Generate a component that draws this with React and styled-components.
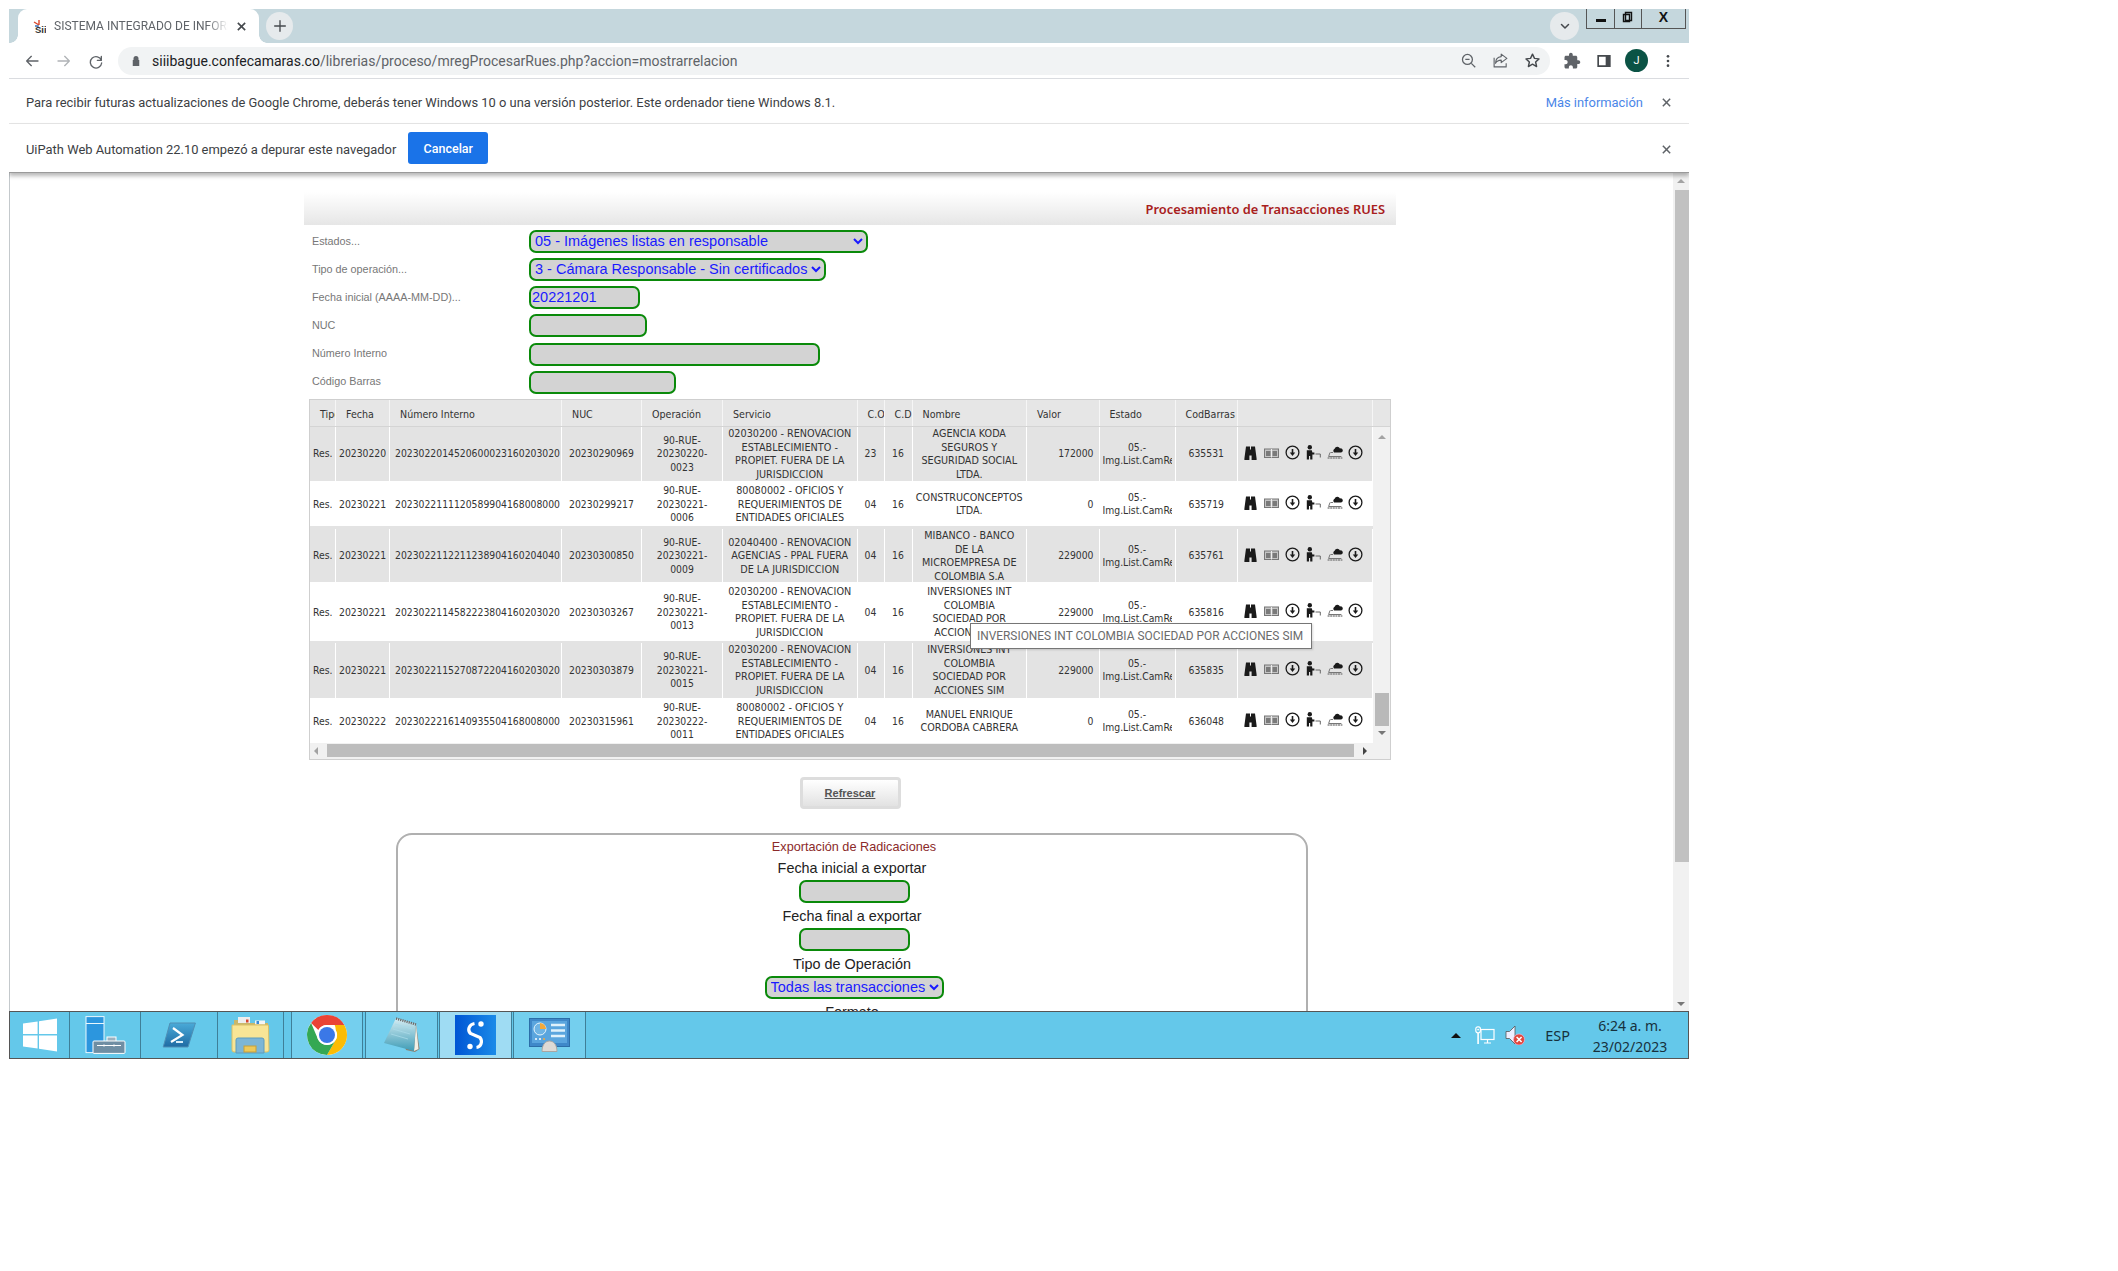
import React from "react";
import styled, { createGlobalStyle } from "styled-components";

const Global = createGlobalStyle`
  html, body { margin: 0; padding: 0; background: #fff; overflow: hidden; }
  body { font-family: "Liberation Sans", Arial, sans-serif; }
  * { box-sizing: border-box; }
`;

const Shell = styled.div`
  width: 1680px;
  height: 1050px;
  margin: 9px 0 0 9px;
  display: flex;
  flex-direction: column;
  overflow: hidden;
`;

/* ---------- browser chrome ---------- */
const TabStrip = styled.div`
  height: 34px;
  flex: none;
  background: #c5d7dd;
  display: flex;
  align-items: flex-end;
  padding-left: 9px;
  position: relative;
`;
const Tab = styled.div`
  width: 241px;
  height: 34px;
  background: #fff;
  border-radius: 9px 9px 0 0;
  display: flex;
  align-items: center;
  padding: 0 11px 0 15px;
  gap: 8px;
  position: relative;
  &::before,
  &::after {
    content: "";
    position: absolute;
    bottom: 0;
    width: 8px;
    height: 8px;
  }
  &::before {
    left: -8px;
    background: radial-gradient(circle at 0 0, #c5d7dd 7.5px, #fff 8px);
  }
  &::after {
    right: -8px;
    background: radial-gradient(circle at 100% 0, #c5d7dd 7.5px, #fff 8px);
  }
`;
const TabTitle = styled.span`
  font: 12px "Roboto", sans-serif;
  color: #5f6368;
  width: 174px;
  white-space: nowrap;
  overflow: hidden;
  -webkit-mask-image: linear-gradient(90deg, #000 88%, transparent);
  mask-image: linear-gradient(90deg, #000 88%, transparent);
`;
const TabClose = styled.span`
  display: flex;
  color: #45494d;
`;
const RoundButton = styled.span`
  width: ${(p) => p.$w}px;
  height: ${(p) => p.$h}px;
  border-radius: 50%;
  background: #e6eaec;
  display: flex;
  align-items: center;
  justify-content: center;
  color: #45494d;
  flex: none;
`;
const NewTabSlot = styled.div`
  align-self: center;
  margin-left: 7px;
`;
const StripRight = styled.div`
  margin-left: auto;
  align-self: flex-start;
  display: flex;
  align-items: flex-start;
  padding-right: 3px;
  gap: 7px;
`;
const ChevronSlot = styled.div`
  margin-top: 3px;
`;
const WinControls = styled.div`
  display: flex;
  height: 20px;
  width: 100px;
  border: 1px solid #555;
  border-top: none;
`;
const WinControl = styled.span`
  width: ${(p) => p.$w}px;
  border-right: ${(p) => (p.$last ? "none" : "1px solid #555")};
  display: flex;
  align-items: center;
  justify-content: center;
  font: bold 14px "Liberation Sans", sans-serif;
  color: #111;
  padding-bottom: 3px;
`;
const MinBar = styled.span`
  width: 10px;
  height: 3px;
  background: #111;
  margin-top: 7px;
`;
const Toolbar = styled.div`
  height: 36px;
  flex: none;
  background: #fff;
  border-bottom: 1px solid #dadce0;
  display: flex;
  align-items: center;
  position: relative;
  padding-left: 7px;
  color: #5f6368;
`;
const NavIcon = styled.span`
  width: ${(p) => p.$w || 32}px;
  display: flex;
  justify-content: center;
  color: ${(p) => p.$color || "#5f6368"};
  flex: none;
`;
const Omnibox = styled.div`
  width: 1432px;
  height: 28px;
  margin-left: 6px;
  background: #f1f3f4;
  border-radius: 14px;
  display: flex;
  align-items: center;
  padding: 0 0 0 12px;
`;
const Url = styled.span`
  margin-left: 10px;
  font: 14px "Roboto", sans-serif;
  color: #5f6368;
  white-space: nowrap;
`;
const UrlHost = styled.span`
  color: #202124;
`;
const OmniIcons = styled.div`
  margin-left: auto;
  display: flex;
  padding-right: 2px;
`;
const ToolIcons = styled.div`
  display: flex;
  align-items: center;
  margin-left: 6px;
`;
const Avatar = styled.span`
  width: 23px;
  height: 23px;
  margin: 0 5px;
  border-radius: 50%;
  background: #0b5345;
  color: #fff;
  font: 11px "Roboto", sans-serif;
  display: flex;
  align-items: center;
  justify-content: center;
`;
const InfoBar = styled.div`
  height: ${(p) => p.$h}px;
  flex: none;
  background: #fff;
  border-bottom: 1px solid ${(p) => p.$line};
  ${(p) => p.$shadow && "box-shadow: 0 3px 4px rgba(0,0,0,.28); position: relative; z-index: 2;"}
  display: flex;
  align-items: center;
  padding: 2px 17px 0 17px;
  font: 12.92px "Roboto", sans-serif;
  color: #3c4043;
`;
const InfoLink = styled.span`
  margin-left: auto;
  color: #4a86e8;
  margin-right: 18px;
`;
const CancelButton = styled.span`
  width: 80px;
  height: 32px;
  margin: 0 0 2px 12px;
  background: #1a73e8;
  border-radius: 3px;
  color: #fff;
  font-weight: 500;
  font-size: 12.5px;
  display: flex;
  align-items: center;
  justify-content: center;
`;
const InfoClose = styled.span`
  display: flex;
  color: #5f6368;
  margin-left: ${(p) => (p.$auto ? "auto" : "0")};
`;

/* ---------- page ---------- */
const Main = styled.div`
  flex: 1;
  min-height: 0;
  display: flex;
  border-left: 1px solid #c4c9cc;
  background: #fff;
  overflow: hidden;
`;
const Page = styled.div`
  flex: 1;
  padding: 19px 0 0 294px;
  overflow: hidden;
`;
const PageScrollbar = styled.div`
  width: 16px;
  flex: none;
  background: #f1f1f1;
  display: flex;
  flex-direction: column;
  align-items: center;
  padding-top: 6px;
`;
const ScrollArrow = styled.span`
  width: 0;
  height: 0;
  border-left: 4px solid transparent;
  border-right: 4px solid transparent;
  ${(p) => (p.$down ? "border-top: 4px solid #777;" : "border-bottom: 4px solid #a3a3a3;")}
  flex: none;
`;
const PageThumb = styled.div`
  width: 14px;
  height: 672px;
  flex: none;
  margin: 7px 0 0 2px;
  background: #c1c1c1;
`;
const PageDown = styled.div`
  flex: none;
  display: flex;
  margin-top: 140px;
`;
const Content = styled.div`
  width: 1092px;
`;
const TitleBar = styled.div`
  height: 33px;
  background: linear-gradient(180deg, #fff 0%, #e6e6e6 100%);
  display: flex;
  align-items: flex-end;
  justify-content: flex-end;
  padding: 0 11px 7px 0;
  font: 600 12.85px "Noto Sans", sans-serif;
  color: #a8201c;
`;
const Form = styled.div`
  padding: 5px 0 0 0;
`;
const FormRow = styled.div`
  height: 28.17px;
  display: flex;
  align-items: flex-start;
`;
const FormLabel = styled.label`
  width: 225px;
  height: 23px;
  padding: 0 0 2px 8px;
  display: flex;
  align-items: center;
  font-size: 10.8px;
  color: #777;
`;
const fieldCss = `
  height: 23px;
  margin: 0;
  border: 2.5px solid #0a8a0a;
  border-radius: 7px;
  background: #d3d3d3;
  color: #1a1aff;
  font: 14.5px "Liberation Sans", sans-serif;
  outline: none;
`;
const Field = styled.input`
  ${fieldCss}
  width: ${(p) => p.$w}px;
  padding: 0 1px 2px;
  display: block;
`;
const Picker = styled.select`
  ${fieldCss}
  width: ${(p) => p.$w}px;
  padding: 0 0 2px;
  display: block;
`;

/* ---------- grid ---------- */
const COLS = "26px 54px 172px 80px 81px 134.5px 27px 28px 114.5px 72.5px 76px 62.5px 134.5px";
const Frame = styled.div`
  width: 1082px;
  margin-left: 5px;
  border: 1px solid #cfcfcf;
  background: #f1f1f1;
`;
const HeadRow = styled.div`
  display: grid;
  grid-template-columns: ${COLS} 18px;
  height: 27px;
  background: #e6e6e6;
  border-bottom: 1px solid #d4d4d4;
`;
const HeadCell = styled.div`
  padding: 2px 0 0 10px;
  border-right: ${(p) => (p.$plain ? "none" : "1px solid #f6f6f6")};
  display: flex;
  align-items: center;
  overflow: hidden;
  white-space: nowrap;
  font: 10.6px "DejaVu Sans", sans-serif;
  font-stretch: condensed;
  color: #333;
`;
const Body = styled.div`
  display: flex;
  height: 316px;
`;
const Rows = styled.div`
  width: 1063px;
  flex: none;
`;
const Row = styled.div`
  display: grid;
  grid-template-columns: ${COLS};
  height: ${(p) => p.$h}px;
  padding-top: ${(p) => p.$nudge || 0}px;
  background: ${(p) => (p.$alt ? "#e3e3e3" : "#fff")};
`;
const Cell = styled.div`
  display: flex;
  align-items: center;
  min-width: 0;
  padding: ${(p) => p.$pad || "0 3px"};
  border-right: 1px solid ${(p) => (p.$alt ? "#fff" : "transparent")};
  font: ${(p) => p.$size || 10.3}px/13.6px "DejaVu Sans", sans-serif;
  font-stretch: condensed;
  color: #333;
`;
const CellText = styled.div`
  width: 100%;
  overflow: hidden;
  white-space: pre;
  text-align: ${(p) => p.$align || "center"};
`;
const IconGroup = styled.div`
  display: flex;
  margin: 0 0 3px 1px;
`;
const IconSlot = styled.span`
  width: 21px;
  height: 15px;
  display: flex;
  align-items: center;
  justify-content: center;
  color: ${(p) => p.$color || "#1a1a1a"};
`;
const VBar = styled.div`
  width: 18px;
  flex: none;
  display: flex;
  flex-direction: column;
  align-items: center;
  padding-top: 8px;
`;
const VThumb = styled.div`
  width: 14px;
  height: 33px;
  flex: none;
  margin-top: 254px;
  background: #b9b9b9;
`;
const VDown = styled.div`
  flex: none;
  display: flex;
  margin-top: 5px;
`;
const HBar = styled.div`
  height: 16px;
  display: flex;
  align-items: center;
  padding: 0 4px;
`;
const HArrow = styled.span`
  width: 0;
  height: 0;
  border-top: 4px solid transparent;
  border-bottom: 4px solid transparent;
  ${(p) => (p.$right ? "border-left: 4px solid #444;" : "border-right: 4px solid #a3a3a3;")}
  flex: none;
`;
const HThumb = styled.div`
  width: 1027px;
  height: 13px;
  margin: 0 9px;
  background: #bdbdbd;
`;
const TableWrap = styled.div`
  position: relative;
`;
const Tooltip = styled.div`
  position: absolute;
  left: 666px;
  top: 224px;
  width: 342px;
  height: 26px;
  background: #fff;
  border: 1px solid #767676;
  box-shadow: 1px 1px 2px rgba(0, 0, 0, 0.15);
  display: flex;
  align-items: center;
  padding-left: 6px;
  font: 11.9px "Roboto", sans-serif;
  color: #6b6b6b;
  white-space: nowrap;
`;
const RefreshWrap = styled.div`
  display: flex;
  justify-content: center;
  margin: 17px 0 24px;
`;
const RefreshButton = styled.span`
  width: 101px;
  height: 32px;
  border: 3px solid #ddd;
  border-radius: 4px;
  background: linear-gradient(180deg, #fff, #e2e2e2);
  display: flex;
  align-items: center;
  justify-content: center;
  font: bold 11px "Liberation Sans", sans-serif;
  color: #555;
  text-decoration: underline;
`;
const ExportBox = styled.div`
  width: 912px;
  margin-left: 92px;
  height: 400px;
  border: 2px solid #b0b0b0;
  border-radius: 16px 16px 0 0;
  padding: 4px 0 0 4px;
  display: flex;
  flex-direction: column;
  align-items: center;
`;
const ExportTitle = styled.div`
  font-size: 12.7px;
  line-height: 16px;
  color: #8b2a2a;
`;
const ExportLabel = styled.div`
  font-size: 14.4px;
  line-height: 16px;
  margin: 5px 4px 4px 0;
  color: #222;
`;

/* ---------- taskbar ---------- */
const Taskbar = styled.div`
  height: 48px;
  flex: none;
  background: #64c8ea;
  border: 1px solid #555;
  display: flex;
  position: relative;
  z-index: 3;
`;
const TaskButton = styled.div`
  width: ${(p) => p.$w}px;
  flex: none;
  display: flex;
  align-items: center;
  justify-content: center;
  border-right: 1px solid #3f7f98;
  background: ${(p) => (p.$active ? "#9fdcf3" : p.$soft ? "#74cfee" : "transparent")};
`;
const Tray = styled.div`
  margin-left: auto;
  display: flex;
  align-items: center;
  padding-right: 20px;
  font-family: "Noto Sans", sans-serif;
  color: #17313d;
`;
const TrayArrow = styled.span`
  width: 0;
  height: 0;
  border-left: 5px solid transparent;
  border-right: 5px solid transparent;
  border-bottom: 5px solid #111;
  margin-right: 14px;
`;
const TrayIcon = styled.span`
  display: flex;
  margin-right: ${(p) => p.$m}px;
`;
const TrayLang = styled.span`
  font-size: 14.5px;
  margin-right: 22px;
`;
const Clock = styled.div`
  text-align: center;
  font-size: 14px;
  line-height: 21px;
  width: 76px;
  padding-top: 1px;
`;

/* ---------- icons ---------- */
const Svg = ({ s = 16, w, h, vb = "0 0 24 24", children }) => (
  <svg width={w || s} height={h || s} viewBox={vb} fill="none">{children}</svg>
);
const line = { stroke: "currentColor", strokeWidth: 2, strokeLinecap: "round", strokeLinejoin: "round" };
const Cross = ({ s = 13, sw = 1.7 }) => (
  <Svg s={s}><path d="M4 4l16 16M20 4L4 20" stroke="currentColor" strokeWidth={sw * 24 / s} strokeLinecap="butt" /></Svg>
);
const Favicon = () => (
  <svg width="13" height="15" viewBox="0 0 13 15">
    <path d="M1 3l5 3M6 1v5" stroke="#d9472b" strokeWidth="1.4" />
    <path d="M2 7h3v2" stroke="#3a6fb5" strokeWidth="1.3" fill="none" />
    <text x="2" y="14" fontFamily="Liberation Sans" fontWeight="bold" fontSize="9.5" fill="#333">Sii</text>
  </svg>
);
const Binoculars = () => (
  <svg width="13" height="14" viewBox="0 0 13 14"><path fill="currentColor" d="M2 .6h4v3h1v-3h4l1.600 12V14H7.600V9.500H5.400V14H.4v-1.400z" /></svg>
);
const Book = () => (
  <svg width="15" height="10" viewBox="0 0 15 10"><rect x=".5" y="1" width="14" height="8.500" fill="#c4c4c4" stroke="#777" /><path d="M2 3h4.500v5H2zM8.500 3H13v5H8.500z" fill="#7a7a7a" /><path d="M7.500 1v8.500" stroke="#eee" /></svg>
);
const DownCircle = () => (
  <svg width="15" height="15" viewBox="0 0 15 15" fill="none"><circle cx="7.500" cy="7.500" r="6.400" stroke="currentColor" strokeWidth="1.300" /><path d="M7.500 4v5" stroke="currentColor" strokeWidth="1.600" /><path d="M4.800 7.500h5.400L7.500 11z" fill="currentColor" /></svg>
);
const PersonDesk = () => (
  <svg width="15" height="15" viewBox="0 0 15 15"><circle cx="3.800" cy="2.300" r="2.200" fill="currentColor" /><path fill="currentColor" d="M.8 5.200h5l.6 2.400h2v1.800H6.400v5.200H4.200V11H3v3.600H.8z" /><path d="M9.500 9h4.800v3.500" stroke="#666" strokeWidth="1" fill="none" /></svg>
);
const CloudLaptop = () => (
  <svg width="16" height="13" viewBox="0 0 16 13"><path fill="currentColor" d="M7 6.500a2.400 2.400 0 0 1 .6-3.800A3 3 0 0 1 13 2.400a2 2 0 0 1 1.200 4.100z" /><path d="M3.500 6.500H6M3 6.500L1.600 10.500h12.800" stroke="#777" strokeWidth="1" fill="none" /><path d="M.6 12h14.800" stroke="#888" strokeWidth="1.300" strokeDasharray="2 .6" /></svg>
);

const RowIcons = () => (
  <IconGroup>
    <IconSlot><Binoculars /></IconSlot>
    <IconSlot><Book /></IconSlot>
    <IconSlot><DownCircle /></IconSlot>
    <IconSlot><PersonDesk /></IconSlot>
    <IconSlot><CloudLaptop /></IconSlot>
    <IconSlot><DownCircle /></IconSlot>
  </IconGroup>
);

const WindowsLogo = () => (
  <svg width="34" height="34" viewBox="0 0 34 34"><path fill="#fff" d="M0 5.400L14.600 3.400V16H0zM16 3.200L34 .6V16H16zM0 17.600h14.600v12.800L0 28.400zM16 17.600h18V33.400L16 30.800z" /></svg>
);
const ServerIcon = () => (
  <svg width="41" height="38" viewBox="0 0 41 38">
    <rect x="1" y="0.600" width="18" height="36" fill="#2c96de" stroke="#e9f7fd" />
    <path d="M1 7.500h18" stroke="#e9f7fd" />
    <rect x="22" y="21" width="9" height="5" fill="#9cb1bf" stroke="#fff" />
    <rect x="8" y="25" width="32" height="12.400" rx="1" fill="#6f8ea3" stroke="#fff" />
    <path d="M12 29.500h24" stroke="#fff" />
    <circle cx="19" cy="29.500" r="1" fill="#fff" /><circle cx="29" cy="29.500" r="1" fill="#fff" />
  </svg>
);
const PowerShell = () => (
  <svg width="34" height="26" viewBox="0 0 34 26">
    <defs><linearGradient id="ps" x1="0" y1="0" x2="0" y2="1"><stop offset="0" stopColor="#4aaad8" /><stop offset="1" stopColor="#1f6ba3" /></linearGradient></defs>
    <path d="M8 1h25.400L26 25H1.200z" fill="url(#ps)" stroke="#4f8fb5" />
    <path d="M11 6l9.500 7L9 20" stroke="#fff" strokeWidth="2.200" fill="none" />
    <path d="M14 20h7" stroke="#d7eefa" strokeWidth="2" />
  </svg>
);
const FolderIcon = () => (
  <svg width="39" height="38" viewBox="0 0 39 38">
    <path d="M3 4h11l2 3h21v8H3z" fill="#c9b76a" />
    <rect x="7" y="1" width="12" height="6" fill="#eee" />
    <rect x="15" y="3.500" width="2.500" height="3" fill="#d8442c" />
    <rect x="24" y="4.500" width="10" height="4" fill="#f5f5f5" />
    <rect x="25.500" y="5" width="2.500" height="3" fill="#3a8bd8" />
    <path d="M1 9h36.500l.5 25a2 2 0 0 1-2 2H3a2 2 0 0 1-2-2z" fill="#f8e596" stroke="#d9bf66" />
    <path d="M5 37V24a2 2 0 0 1 2-2h24a2 2 0 0 1 2 2v13z" fill="#7cb6d6" stroke="#5d9cbe" />
    <rect x="13" y="30" width="12" height="6" fill="#edc95a" stroke="#c59f3a" />
  </svg>
);
const ChromeLogo = () => (
  <svg width="40" height="40" viewBox="0 0 40 40">
    <circle cx="20" cy="20" r="20" fill="#fff" />
    <path d="M20 0a20 20 0 0 1 17.320 10H20a10 10 0 0 0-8.660 5L4.100 7.900A20 20 0 0 1 20 0z" fill="#ea4335" />
    <path d="M37.320 10A20 20 0 0 1 20 40l8.660-15A10 10 0 0 0 28.660 15a10 10 0 0 0-1-5z" fill="#fbbc04" />
    <path d="M4.100 7.900L11.340 25A10 10 0 0 0 28.660 25L20 40A20 20 0 0 1 4.100 7.900z" fill="#34a853" />
    <circle cx="20" cy="20" r="10" fill="#fff" />
    <circle cx="20" cy="20" r="8" fill="#3b78e7" />
  </svg>
);
const NotepadIcon = () => (
  <svg width="37" height="36" viewBox="0 0 37 36">
    <defs><linearGradient id="np" x1="0" y1="0" x2="0" y2="1"><stop offset="0" stopColor="#d7eef4" /><stop offset="1" stopColor="#3f9cb6" /></linearGradient></defs>
    <path d="M13 1l20 6 3.500 25-4.500 3-9-2z" fill="#8a8172" />
    <path d="M31 34l2-27 2.500 25z" fill="#f2f0e6" />
    <path d="M13 1l20 6-2 27L1 26z" fill="url(#np)" />
    <path d="M12 7l17 5M10 12l17 5M8 17l17 5" stroke="#a9dbe8" strokeWidth=".8" />
    <path d="M13 1.500l20 6" stroke="#6a6a6a" strokeWidth="2.500" strokeDasharray="1.200 1" />
  </svg>
);
const SiiIcon = () => (
  <svg width="41" height="40" viewBox="0 0 41 40">
    <defs><linearGradient id="sii" x1="0" y1="0" x2="1" y2="0"><stop offset="0" stopColor="#0055d4" /><stop offset="1" stopColor="#1b8ae8" /></linearGradient></defs>
    <rect width="41" height="40" fill="url(#sii)" />
    <path d="M19.500 8.500c-5.500 1-7.500 6.500-4 10l9.500 4c3 4 1 9.500-3.500 10" stroke="#fff" strokeWidth="3.200" fill="none" />
    <circle cx="26" cy="9" r="2.700" fill="#fff" />
    <circle cx="15" cy="31.500" r="2.700" fill="#fff" />
  </svg>
);
const PanelIcon = () => (
  <svg width="41" height="34" viewBox="0 0 41 34">
    <rect x=".5" y=".5" width="40" height="28" fill="#3f88c9" stroke="#2c6ea8" />
    <rect x="3" y="3" width="35" height="22" fill="#5aa5de" />
    <circle cx="11" cy="11" r="6" fill="#6fb4e4" stroke="#e6f5fc" />
    <path d="M11 11V5a6 6 0 0 1 6 6z" fill="#f3a93b" />
    <path d="M22 7h14M22 12.500h14M22 18h14" stroke="#dff1fb" strokeWidth="2.600" />
    <circle cx="7" cy="21" r="1" fill="#fff" /><circle cx="11" cy="21" r="1" fill="#fff" /><circle cx="15" cy="21" r="1" fill="#f3a93b" />
    <path d="M13 33.500c0-7 3.500-10.500 7.500-10.500s7.500 3.500 7.500 10.500z" fill="#dedad5" stroke="#a9a6a2" />
  </svg>
);
const NetworkIcon = () => (
  <svg width="20" height="19" viewBox="0 0 20 19" fill="none" stroke="#fff" strokeWidth="1.200">
    <rect x="6" y="3.500" width="13" height="10" />
    <path d="M12.500 13.500v3M9 17h7" />
    <rect x=".8" y=".8" width="4.600" height="6" rx="2" fill="#64c8ea" />
    <path d="M3.100 7v11" strokeWidth="1.600" />
    <circle cx="3.100" cy="3.600" r=".9" fill="#fff" stroke="none" />
  </svg>
);
const MutedIcon = () => (
  <svg width="20" height="20" viewBox="0 0 20 20">
    <path d="M1 6.500h3.500L10 1v18l-5.500-5.500H1z" fill="#eef" stroke="#555" strokeWidth=".8" />
    <circle cx="14" cy="14.500" r="5.500" fill="#e0473c" stroke="#fbd" strokeWidth=".6" />
    <path d="M11.600 12l5 5M16.600 12l-5 5" stroke="#fff" strokeWidth="1.600" />
  </svg>
);

const rows = [
  { h: 54, alt: true, f: "20230220", i: "202302201452060002316020302000", n: "20230290969", op: "90-RUE-\n20230220-\n0023", s: "02030200 - RENOVACION\nESTABLECIMIENTO -\nPROPIET. FUERA DE LA\nJURISDICCION", co: "23", nm: "AGENCIA KODA\nSEGUROS Y\nSEGURIDAD SOCIAL\nLTDA.", v: "172000", b: "635531" },
  { h: 45, nudge: 2, f: "20230221", i: "202302211112058990416800800020", n: "20230299217", op: "90-RUE-\n20230221-\n0006", s: "80080002 - OFICIOS Y\nREQUERIMIENTOS DE\nENTIDADES OFICIALES", co: "04", nm: "CONSTRUCONCEPTOS\nLTDA.", v: "0", b: "635719" },
  { h: 56, nudge: 3, alt: true, f: "20230221", i: "202302211221123890416020404000", n: "20230300850", op: "90-RUE-\n20230221-\n0009", s: "02040400 - RENOVACION\nAGENCIAS - PPAL FUERA\nDE LA JURISDICCION", co: "04", nm: "MIBANCO - BANCO\nDE LA\nMICROEMPRESA DE\nCOLOMBIA S.A", v: "229000", b: "635761" },
  { h: 59, nudge: 2, f: "20230221", i: "202302211458222380416020302000", n: "20230303267", op: "90-RUE-\n20230221-\n0013", s: "02030200 - RENOVACION\nESTABLECIMIENTO -\nPROPIET. FUERA DE LA\nJURISDICCION", co: "04", nm: "INVERSIONES INT\nCOLOMBIA\nSOCIEDAD POR\nACCIONES SIM", v: "229000", b: "635816" },
  { h: 57, nudge: 2, alt: true, f: "20230221", i: "202302211527087220416020302000", n: "20230303879", op: "90-RUE-\n20230221-\n0015", s: "02030200 - RENOVACION\nESTABLECIMIENTO -\nPROPIET. FUERA DE LA\nJURISDICCION", co: "04", nm: "INVERSIONES INT\nCOLOMBIA\nSOCIEDAD POR\nACCIONES SIM", v: "229000", b: "635835" },
  { h: 45, nudge: 2, f: "20230222", i: "202302221614093550416800800020", n: "20230315961", op: "90-RUE-\n20230222-\n0011", s: "80080002 - OFICIOS Y\nREQUERIMIENTOS DE\nENTIDADES OFICIALES", co: "04", nm: "MANUEL ENRIQUE\nCORDOBA CABRERA", v: "0", b: "636048" },
];
const heads = ["Tipo", "Fecha", "Número Interno", "NUC", "Operación", "Servicio", "C.O", "C.D", "Nombre", "Valor", "Estado", "CodBarras", ""];
const fields = [
  { label: "Fecha inicial (AAAA-MM-DD)...", w: 111, value: "20221201" },
  { label: "NUC", w: 118 },
  { label: "Número Interno", w: 291 },
  { label: "Código Barras", w: 147 },
];

export default function App() {
  return (
    <>
      <Global />
      <Shell>
        <TabStrip>
          <Tab>
            <Favicon />
            <TabTitle>SISTEMA INTEGRADO DE INFORMACIÓN</TabTitle>
            <TabClose><Cross s={11} sw={1.6} /></TabClose>
          </Tab>
          <NewTabSlot>
            <RoundButton $w={27} $h={28}>
              <Svg s={16}><path d="M12 4v16M4 12h16" {...line} /></Svg>
            </RoundButton>
          </NewTabSlot>
          <StripRight>
            <ChevronSlot>
              <RoundButton $w={29} $h={28}>
                <Svg s={12}><path d="M5 9l7 7 7-7" {...line} strokeWidth={3} /></Svg>
              </RoundButton>
            </ChevronSlot>
            <WinControls>
              <WinControl $w={28}><MinBar /></WinControl>
              <WinControl $w={27}>
                <Svg s={12} vb="0 0 12 12"><path d="M3.500 1.500h6v8h-6z M1.500 3.500h6v7h-6z" stroke="#111" strokeWidth="1.400" fill="none" /></Svg>
              </WinControl>
              <WinControl $w={43} $last>X</WinControl>
            </WinControls>
          </StripRight>
        </TabStrip>

        <Toolbar>
          <NavIcon><Svg s={16}><path d="M21 12H4M11 5l-7 7 7 7" {...line} /></Svg></NavIcon>
          <NavIcon $color="#b0b3b6"><Svg s={16}><path d="M3 12h17M13 5l7 7-7 7" {...line} /></Svg></NavIcon>
          <NavIcon><Svg s={16}><path d="M20 5v6h-6M20 11a8.500 8.500 0 1 0 .5 4" {...line} /></Svg></NavIcon>
          <Omnibox>
            <Svg s={12}><path d="M7 10V7a5 5 0 0 1 10 0v3h1.500v12h-13V10z" fill="#5f6368" /></Svg>
            <Url><UrlHost>siiibague.confecamaras.co</UrlHost>/librerias/proceso/mregProcesarRues.php?accion=mostrarrelacion</Url>
            <OmniIcons>
              <NavIcon>
                <Svg s={17}><circle cx="10.500" cy="10.500" r="7" stroke="currentColor" strokeWidth="1.800" /><path d="M7.500 10.500h6M16 16l5.500 5.500" stroke="currentColor" strokeWidth="1.800" /></Svg>
              </NavIcon>
              <NavIcon>
                <Svg s={17}><path d="M3 8v13h17v-5M13 3l8 6-8 6v-3.500c-4 0-6.500 1.500-8 4.500 0-5.500 3-9 8-9.500z" stroke="currentColor" strokeWidth="1.600" strokeLinejoin="round" /></Svg>
              </NavIcon>
              <NavIcon $color="#45494d">
                <Svg s={17}><path d="M12 3l2.800 6 6.400.7-4.800 4.400 1.400 6.400L12 17.200l-5.800 3.300 1.400-6.400-4.800-4.400 6.400-.7z" stroke="currentColor" strokeWidth="2" strokeLinejoin="round" /></Svg>
              </NavIcon>
            </OmniIcons>
          </Omnibox>
          <ToolIcons>
            <NavIcon $w={32} $color="#5f6368">
              <Svg s={18}><path fill="currentColor" d="M20.500 11H19V7c0-1.100-.9-2-2-2h-4V3.500C13 2.120 11.880 1 10.500 1S8 2.120 8 3.500V5H4c-1.100 0-1.990.9-1.990 2v3.800H3.500c1.490 0 2.700 1.210 2.700 2.700s-1.210 2.700-2.700 2.700H2V20c0 1.100.9 2 2 2h3.800v-1.500c0-1.490 1.210-2.700 2.700-2.700 1.490 0 2.700 1.210 2.700 2.700V22H17c1.100 0 2-.9 2-2v-4h1.500c1.380 0 2.500-1.120 2.500-2.500S21.880 11 20.500 11z" /></Svg>
            </NavIcon>
            <NavIcon $w={32} $color="#45494d">
              <Svg s={16}><path fill="currentColor" fillRule="evenodd" d="M2 3h20v18H2zM4.500 5.500v13h10v-13z" /></Svg>
            </NavIcon>
            <Avatar>J</Avatar>
            <NavIcon $w={30} $color="#45494d">
              <Svg s={16}><circle cx="12" cy="5" r="2" fill="currentColor" /><circle cx="12" cy="12" r="2" fill="currentColor" /><circle cx="12" cy="19" r="2" fill="currentColor" /></Svg>
            </NavIcon>
          </ToolIcons>
        </Toolbar>

        <InfoBar $h={45} $line="#e6e6e6">
          Para recibir futuras actualizaciones de Google Chrome, deberás tener Windows 10 o una versión posterior. Este ordenador tiene Windows 8.1.
          <InfoLink>Más información</InfoLink>
          <InfoClose><Cross s={11} sw={1.500} /></InfoClose>
        </InfoBar>
        <InfoBar $h={49} $line="#9a9a9a" $shadow>
          UiPath Web Automation 22.10 empezó a depurar este navegador
          <CancelButton>Cancelar</CancelButton>
          <InfoClose $auto><Cross s={11} sw={1.500} /></InfoClose>
        </InfoBar>

        <Main>
          <Page>
            <Content>
              <TitleBar>Procesamiento de Transacciones RUES</TitleBar>
              <Form>
                <FormRow>
                  <FormLabel>Estados...</FormLabel>
                  <Picker $w={339} defaultValue="05"><option value="05">05 - Imágenes listas en responsable</option></Picker>
                </FormRow>
                <FormRow>
                  <FormLabel>Tipo de operación...</FormLabel>
                  <Picker $w={297} defaultValue="3"><option value="3">3 - Cámara Responsable - Sin certificados</option></Picker>
                </FormRow>
                {fields.map((f) => (
                  <FormRow key={f.label}>
                    <FormLabel>{f.label}</FormLabel>
                    <Field $w={f.w} defaultValue={f.value || ""} />
                  </FormRow>
                ))}
              </Form>
              <TableWrap>
                <Frame>
                  <HeadRow>
                    {heads.map((h) => <HeadCell key={h || "tools"}>{h}</HeadCell>)}
                    <HeadCell $plain />
                  </HeadRow>
                  <Body>
                    <Rows>
                      {rows.map((r) => (
                        <Row key={r.b} $h={r.h} $alt={r.alt} $nudge={r.nudge}>
                          <Cell $alt={r.alt}><CellText $align="left">Res.</CellText></Cell>
                          <Cell $alt={r.alt}><CellText>{r.f}</CellText></Cell>
                          <Cell $alt={r.alt} $pad="0 1px 0 5px"><CellText $align="left">{r.i}</CellText></Cell>
                          <Cell $alt={r.alt}><CellText>{r.n}</CellText></Cell>
                          <Cell $alt={r.alt}><CellText>{r.op}</CellText></Cell>
                          <Cell $alt={r.alt} $pad="0" $size={10.75}><CellText>{r.s}</CellText></Cell>
                          <Cell $alt={r.alt}><CellText>{r.co}</CellText></Cell>
                          <Cell $alt={r.alt}><CellText>16</CellText></Cell>
                          <Cell $alt={r.alt} $pad="0" $size={10.7}><CellText>{r.nm}</CellText></Cell>
                          <Cell $alt={r.alt} $pad="0 5px 0 0"><CellText $align="right">{r.v}</CellText></Cell>
                          <Cell $alt={r.alt}><CellText>{"05.-\nImg.List.CamReady"}</CellText></Cell>
                          <Cell $alt={r.alt}><CellText>{r.b}</CellText></Cell>
                          <Cell $alt={r.alt} $pad="0 0 0 1px"><RowIcons /></Cell>
                        </Row>
                      ))}
                    </Rows>
                    <VBar>
                      <ScrollArrow />
                      <VThumb />
                      <VDown><ScrollArrow $down /></VDown>
                    </VBar>
                  </Body>
                  <HBar>
                    <HArrow />
                    <HThumb />
                    <HArrow $right />
                  </HBar>
                </Frame>
                <Tooltip>INVERSIONES INT COLOMBIA SOCIEDAD POR ACCIONES SIM</Tooltip>
              </TableWrap>
              <RefreshWrap><RefreshButton>Refrescar</RefreshButton></RefreshWrap>
              <ExportBox>
                <ExportTitle>Exportación de Radicaciones</ExportTitle>
                <ExportLabel>Fecha inicial a exportar</ExportLabel>
                <Field $w={111} />
                <ExportLabel>Fecha final a exportar</ExportLabel>
                <Field $w={111} />
                <ExportLabel>Tipo de Operación</ExportLabel>
                <Picker $w={179} defaultValue="t"><option value="t">Todas las transacciones</option></Picker>
                <ExportLabel>Formato</ExportLabel>
              </ExportBox>
            </Content>
          </Page>
          <PageScrollbar>
            <ScrollArrow />
            <PageThumb />
            <PageDown><ScrollArrow $down /></PageDown>
          </PageScrollbar>
        </Main>

        <Taskbar>
          <TaskButton $w={60}><WindowsLogo /></TaskButton>
          <TaskButton $w={71}><ServerIcon /></TaskButton>
          <TaskButton $w={77}><PowerShell /></TaskButton>
          <TaskButton $w={66}><FolderIcon /></TaskButton>
          <TaskButton $w={8} />
          <TaskButton $w={71} $soft><ChromeLogo /></TaskButton>
          <TaskButton $w={3} />
          <TaskButton $w={72} $soft><NotepadIcon /></TaskButton>
          <TaskButton $w={2} />
          <TaskButton $w={72} $active><SiiIcon /></TaskButton>
          <TaskButton $w={2} />
          <TaskButton $w={72} $soft><PanelIcon /></TaskButton>
          <Tray>
            <TrayArrow />
            <TrayIcon $m={10}><NetworkIcon /></TrayIcon>
            <TrayIcon $m={20}><MutedIcon /></TrayIcon>
            <TrayLang>ESP</TrayLang>
            <Clock>6:24 a. m.<br />23/02/2023</Clock>
          </Tray>
        </Taskbar>
      </Shell>
    </>
  );
}
